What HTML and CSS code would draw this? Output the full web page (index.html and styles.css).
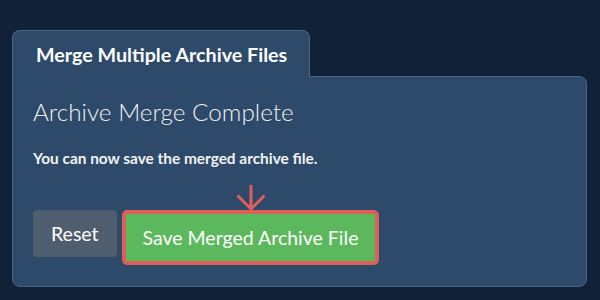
FILE: index.html
```html
<!DOCTYPE html>
<html lang="en">
<head>
<meta charset="utf-8">
<title>Merge Multiple Archive Files</title>
<link rel="stylesheet" href="styles.css">
</head>
<body>
<div class="wrap">
  <div class="tabs">
    <div class="tab">Merge Multiple Archive Files</div>
  </div>
  <div class="panel">
    <h2 class="title">Archive Merge Complete</h2>
    <p class="msg">You can now save the merged archive file.</p>
    <div class="actions">
      <button class="btn btn-reset">Reset</button>
      <div class="highlight">
        <svg class="arrow" width="30" height="27" viewBox="0 0 30 27" aria-hidden="true">
          <path d="M15 0 V23 M1.5 10.5 L15 24 L28.5 10.5" fill="none" stroke="#df5e5a" stroke-width="3" stroke-linejoin="miter"/>
        </svg>
        <button class="btn btn-save">Save Merged Archive File</button>
      </div>
    </div>
  </div>
</div>
</body>
</html>
```

FILE: styles.css
```css
html, body {
  margin: 0;
  padding: 0;
  background: #112238;
  width: 600px;
  height: 300px;
  overflow: hidden;
}
body {
  font-family: Lato, "Open Sans", sans-serif;
  color: #f2f2f2;
}
.wrap {
  padding: 30px 13px 0 12px;
}
.tabs {
  display: flex;
}
.tab {
  position: relative;
  z-index: 1;
  background: #2d4a6a;
  border: 1px solid #4b6787;
  border-bottom: none;
  border-radius: 8px 8px 0 0;
  padding: 12px 22px 10px 23px;
  margin-bottom: -1px;
  font-size: 19.7px;
  line-height: 24px;
  font-weight: 700;
  color: #ffffff;
}
.panel {
  background: #2d4a6a;
  border: 1px solid #4b6787;
  border-radius: 0 8px 8px 8px;
  padding: 21px 20px 0 20px;
  height: 188px;
}
.title {
  margin: 0;
  font-size: 24.3px;
  line-height: 28px;
  font-weight: 300;
  color: #f0f0f0;
}
.msg {
  margin: 22px 0 0 0;
  font-size: 15.4px;
  line-height: 20px;
  font-weight: 700;
  color: #f2f2f2;
}
.actions {
  display: flex;
  align-items: flex-start;
  gap: 5px;
  margin-top: 42px;
}
.btn {
  font-family: Lato, "Open Sans", sans-serif;
  font-size: 19.5px;
  line-height: 24px;
  font-weight: 400;
  color: #ffffff;
  border: none;
  padding: 12px 18px 11px 18px;
  margin: 0;
  cursor: pointer;
}
.btn-reset {
  background: #4f5e6e;
  border-radius: 4px;
}
.highlight {
  position: relative;
  border: 4px solid #df5e5a;
  border-radius: 5px;
  display: flex;
}
.btn-save {
  background: #5cb85c;
  border-radius: 0;
  padding: 12px 17px 11px 17px;
}
.arrow {
  position: absolute;
  left: 50%;
  bottom: 100%;
  margin-left: -15px;
  margin-bottom: 2px;
  display: block;
}
```
